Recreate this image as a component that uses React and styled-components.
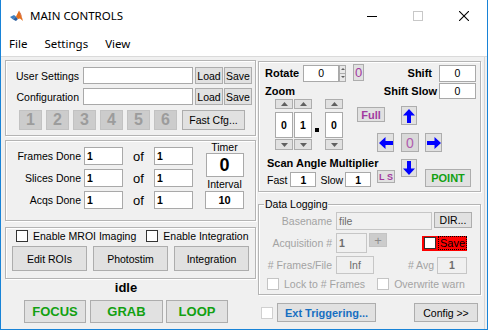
import React from "react";
import styled, { createGlobalStyle } from "styled-components";

const UI = `"Liberation Sans", Arial, sans-serif`;
const SYS = `"Noto Sans", "Open Sans", sans-serif`;
const MUTED = "#a3a3a3";
const PURPLE = "#a2399f";
const GREEN = "#12a012";
const BLUE = "#0000ff";

const GlobalStyle = createGlobalStyle`
  html, body { margin: 0; padding: 0; background: #fff; }
  * { box-sizing: border-box; }
`;

const Window = styled.div`
  width: 488px;
  height: 330px;
  display: flex;
  flex-direction: column;
  border: 1px solid #1883d7;
  border-top: none;
  background: #f0f0f0;
  font-family: ${UI};
  font-size: 10.5px;
  color: #000;
  overflow: hidden;
`;

const TitleBar = styled.div`
  height: 31px;
  flex-shrink: 0;
  display: flex;
  align-items: center;
  background: #fff;
`;

const AppIcon = styled.svg`
  margin-left: 9px;
  flex-shrink: 0;
`;

const Title = styled.span`
  margin-left: 7px;
  font-family: ${SYS};
  font-size: 11.5px;
`;

const Caption = styled.div`
  margin-left: auto;
  display: flex;
  height: 100%;
`;

const CaptionBtn = styled.div`
  width: 46px;
  height: 100%;
  display: flex;
  align-items: center;
  justify-content: center;
`;

const MenuBar = styled.div`
  height: 26px;
  flex-shrink: 0;
  display: flex;
  align-items: center;
  gap: 17px;
  padding-left: 8px;
  background: #fff;
  border-bottom: 1px solid #dadada;
  font-family: ${SYS};
  font-size: 11.5px;
`;

const Client = styled.div`
  flex: 1;
  display: flex;
  padding: 3px 0 0 4px;
  margin-right: 2px;
  border-right: 1px solid #d6d6d6;
`;

const LeftCol = styled.div`
  width: 251px;
  display: flex;
  flex-direction: column;
`;

const RightCol = styled.div`
  width: 223px;
  margin-left: 2px;
  display: flex;
  flex-direction: column;
`;

const Panel = styled.div`
  position: relative;
  height: ${(p) => p.$h}px;
  margin-top: ${(p) => p.$mt || 0}px;
  display: flex;
  flex-direction: ${(p) => (p.$row ? "row" : "column")};
  border: 1px solid #b4b4b4;
  box-shadow: inset 1px 1px 0 #fff, 1px 1px 0 #fff;
  padding: ${(p) => p.$pad || "0"};
`;

const GroupTitle = styled.span`
  position: absolute;
  top: -7px;
  left: 5px;
  padding: 0 1px;
  line-height: 12px;
  background: #f0f0f0;
`;

const Row = styled.div`
  display: flex;
  align-items: center;
  height: ${(p) => p.$h}px;
  margin-top: ${(p) => p.$mt || 0}px;
  padding-left: ${(p) => p.$pl || 0}px;
  gap: ${(p) => p.$gap || 0}px;
  flex-shrink: 0;
`;

const Label = styled.span`
  width: ${(p) => (p.$w ? `${p.$w}px` : "auto")};
  flex-shrink: 0;
  text-align: right;
  white-space: nowrap;
  margin-left: ${(p) => p.$ml || 0}px;
  margin-right: ${(p) => p.$mr || 0}px;
  color: ${(p) => (p.$muted ? MUTED : "#000")};
  font-weight: ${(p) => (p.$bold ? "bold" : "normal")};
  font-size: ${(p) => (p.$bold ? "11px" : "10.5px")};
`;

const TextBox = styled.div`
  width: ${(p) => p.$w}px;
  height: ${(p) => p.$h}px;
  margin-left: ${(p) => p.$ml || 0}px;
  margin-right: ${(p) => p.$mr || 0}px;
  flex-shrink: 0;
  display: flex;
  align-items: center;
  justify-content: ${(p) => (p.$left ? "flex-start" : "center")};
  padding-left: ${(p) => (p.$left ? 2 : 0)}px;
  background: ${(p) => (p.$off ? "#f0f0f0" : "#fff")};
  border: 1px solid ${(p) => (p.$off ? "#c6c6c6" : "#a9a9a9")};
  color: ${(p) => (p.$off ? "#6d6d6d" : "#000")};
  font-weight: ${(p) => (p.$bold ? "bold" : "normal")};
  font-size: ${(p) => p.$fs || 10.5}px;
`;

const Btn = styled.div`
  width: ${(p) => p.$w}px;
  height: ${(p) => p.$h}px;
  margin-left: ${(p) => p.$ml || 0}px;
  margin-top: ${(p) => p.$mt || 0}px;
  flex-shrink: 0;
  display: flex;
  align-items: center;
  justify-content: center;
  background: ${(p) => p.$bg || "#e1e1e1"};
  border: 1px solid ${(p) => p.$bd || "#adadad"};
  color: ${(p) => p.$color || "#000"};
  font-weight: ${(p) => (p.$bold ? "bold" : "normal")};
  font-size: ${(p) => p.$fs || 10.5}px;
  white-space: nowrap;
  grid-column: ${(p) => p.$col || "auto"};
  grid-row: ${(p) => p.$row || "auto"};
  justify-self: start;
  align-self: start;
`;

const Check = styled.span`
  width: 12px;
  height: 12px;
  flex-shrink: 0;
  background: #fff;
  border: 1px solid ${(p) => p.$bd || "#333"};
`;

const CheckItem = styled.label`
  display: flex;
  align-items: center;
  gap: ${(p) => p.$gap || 5}px;
  margin-left: ${(p) => p.$ml || 0}px;
  white-space: nowrap;
  color: ${(p) => (p.$muted ? MUTED : "#000")};
`;

const NumRow = styled.div`
  display: flex;
  gap: 4px;
  margin-top: 5px;
  padding-left: 13px;
`;

const DoneGrid = styled.div`
  display: grid;
  grid-template-columns: 78px 39px 31px 39px;
  grid-auto-rows: 18px;
  row-gap: 4px;
  margin-top: 6px;
  align-items: center;
`;

const Of = styled.span`
  text-align: center;
  font-size: 13px;
`;

const TimerCol = styled.div`
  width: 39px;
  margin-left: 12px;
  display: flex;
  flex-direction: column;
  align-items: center;
`;

const TimerCaption = styled.span`
  line-height: ${(p) => p.$lh}px;
`;

const Status = styled.div`
  margin-top: 1px;
  line-height: 16px;
  text-align: center;
  padding-right: 9px;
  font-size: 13px;
  font-weight: bold;
`;

const PadGrid = styled.div`
  display: grid;
  grid-template-columns: 92px 20px 18px 6px 18px 6px 18px 28px;
  grid-template-rows: 7px 19px 8px 19px 5px 2px 10px 3px 5px 10px;
`;

const ZoomSpin = styled.div`
  grid-column: 1;
  grid-row: 1 / 5;
  margin-left: 10px;
  display: flex;
  align-items: flex-start;
`;

const SpinCol = styled.div`
  width: 18px;
  margin-left: ${(p) => p.$ml || 0}px;
  display: flex;
  flex-direction: column;
`;

const SpinBtn = styled.div`
  height: ${(p) => p.$h}px;
  margin-top: ${(p) => p.$mt || 0}px;
  display: flex;
  align-items: center;
  justify-content: center;
  background: #e1e1e1;
  border: 1px solid #adadad;
`;

const Dot = styled.span`
  width: 4px;
  height: 4px;
  margin: 29px 6px 0 3px;
  background: #000;
`;

const Stepper = styled.div`
  width: 7px;
  height: 17px;
  display: flex;
  flex-direction: column;
  border: 1px solid #adadad;
  background: #e8e8e8;
`;

const StepHalf = styled.div`
  flex: 1;
  display: flex;
  align-items: center;
  justify-content: center;
  border-top: ${(p) => (p.$sep ? "1px solid #adadad" : "none")};
`;

const PlacedLabel = styled.span`
  grid-column: ${(p) => p.$col};
  grid-row: ${(p) => p.$row};
  margin-left: 2px;
  font-weight: bold;
  font-size: 11px;
  line-height: 12px;
  white-space: nowrap;
`;

const FastRow = styled.div`
  grid-column: 1 / 3;
  grid-row: 9 / 11;
  margin-left: 2px;
  display: flex;
  align-items: center;
`;

const SaveBox = styled.div`
  width: 45px;
  height: 15px;
  margin-left: 35px;
  display: flex;
  align-items: center;
  background: #ff0000;
  padding-left: 2px;
`;

const FocusText = styled.span`
  margin-left: 3px;
  outline: 1px dotted #000;
  line-height: 12px;
  padding: 0 1px;
  font-size: 11px;
`;

const Tri = ({ down, w = 7, h = 4, color = "#606060" }) => (
  <svg width={w} height={h} viewBox={`0 0 ${w} ${h}`}>
    <polygon
      points={down ? `0,0 ${w},0 ${w / 2},${h}` : `0,${h} ${w},${h} ${w / 2},0`}
      fill={color}
    />
  </svg>
);

const Arrow = ({ rot = 0 }) => (
  <svg width="14" height="14" viewBox="0 0 14 14" style={{ transform: `rotate(${rot}deg)` }}>
    <polygon points="7,0 13,6.5 9,6.5 9,14 5,14 5,6.5 1,6.5" fill={BLUE} />
  </svg>
);

const Spin = ({ value, ml }) => (
  <SpinCol $ml={ml}>
    <SpinBtn $h={10}>
      <Tri />
    </SpinBtn>
    <TextBox $w={18} $h={26} $bold style={{ marginTop: 3 }}>
      {value}
    </TextBox>
    <SpinBtn $h={11} $mt={1}>
      <Tri down />
    </SpinBtn>
  </SpinCol>
);

export default function App() {
  return (
    <>
      <GlobalStyle />
      <Window>
        <TitleBar>
          <AppIcon width="13" height="12" viewBox="0 0 13 12">
            <polygon points="0,7 4,5 6,6.5 3,9.5" fill="#3f7fc0" />
            <polygon points="3,9.5 6,6.5 8,9 6,11" fill="#2d5f9e" />
            <polygon points="6,6.5 9,0.5 13,11 10,8.5 8,9" fill="#e5701c" />
            <polygon points="9,0.5 11,4 13,11" fill="#c2401a" />
          </AppIcon>
          <Title>MAIN CONTROLS</Title>
          <Caption>
            <CaptionBtn>
              <svg width="10" height="10" viewBox="0 0 10 10">
                <line x1="0" y1="5.5" x2="10" y2="5.5" stroke="#000" />
              </svg>
            </CaptionBtn>
            <CaptionBtn>
              <svg width="10" height="10" viewBox="0 0 10 10">
                <rect x="0.5" y="0.5" width="9" height="9" fill="none" stroke="#c8c8c8" />
              </svg>
            </CaptionBtn>
            <CaptionBtn>
              <svg width="10" height="10" viewBox="0 0 10 10">
                <path d="M0 0 L10 10 M10 0 L0 10" stroke="#000" strokeWidth="1.1" />
              </svg>
            </CaptionBtn>
          </Caption>
        </TitleBar>

        <MenuBar>
          <span>File</span>
          <span>Settings</span>
          <span>View</span>
        </MenuBar>

        <Client>
          <LeftCol>
            <Panel $h={76}>
              <Row $h={17} $mt={6}>
                <Label $w={73}>User Settings</Label>
                <TextBox $w={110} $h={17} $ml={4} />
                <Btn $w={28} $h={17} $ml={2}>Load</Btn>
                <Btn $w={28} $h={17} $ml={1}>Save</Btn>
              </Row>
              <Row $h={17} $mt={4}>
                <Label $w={73}>Configuration</Label>
                <TextBox $w={110} $h={17} $ml={4} />
                <Btn $w={28} $h={17} $ml={2}>Load</Btn>
                <Btn $w={28} $h={17} $ml={1}>Save</Btn>
              </Row>
              <NumRow>
                {["1", "2", "3", "4", "5", "6"].map((n) => (
                  <Btn key={n} $w={23} $h={20} $bg="#cccccc" $bd="#c2c2c2" $color="#9c9c9c" $bold $fs={16}>
                    {n}
                  </Btn>
                ))}
                <Btn $w={63} $h={20} $ml={1}>Fast Cfg...</Btn>
              </NumRow>
            </Panel>

            <Panel $h={81} $mt={4} $row>
              <DoneGrid>
                {["Frames Done", "Slices Done", "Acqs Done"].map((l) => (
                  <React.Fragment key={l}>
                    <Label $mr={3}>{l}</Label>
                    <TextBox $w={39} $h={18} $left $bold>1</TextBox>
                    <Of>of</Of>
                    <TextBox $w={39} $h={18} $left $bold>1</TextBox>
                  </React.Fragment>
                ))}
              </DoneGrid>
              <TimerCol>
                <TimerCaption $lh={12}>Timer</TimerCaption>
                <TextBox $w={38} $h={24} $bold $fs={18}>0</TextBox>
                <TimerCaption $lh={14}>Interval</TimerCaption>
                <TextBox $w={39} $h={18} $bold $fs={11}>10</TextBox>
              </TimerCol>
            </Panel>

            <Panel $h={52} $mt={6}>
              <Row $h={12} $mt={2} $pl={10}>
                <CheckItem>
                  <Check />
                  Enable MROI Imaging
                </CheckItem>
                <CheckItem $ml={10}>
                  <Check />
                  Enable Integration
                </CheckItem>
              </Row>
              <Row $h={25} $mt={4} $pl={6} $gap={6}>
                <Btn $w={75} $h={25}>Edit ROIs</Btn>
                <Btn $w={75} $h={25}>Photostim</Btn>
                <Btn $w={75} $h={25}>Integration</Btn>
              </Row>
            </Panel>

            <Status>idle</Status>

            <Row $h={23} $mt={4} $pl={19}>
              <Btn $w={62} $h={23} $color={GREEN} $bold $fs={13}>FOCUS</Btn>
              <Btn $w={73} $h={23} $ml={4} $color={GREEN} $bold $fs={13}>GRAB</Btn>
              <Btn $w={62} $h={23} $ml={3} $color={GREEN} $bold $fs={13}>LOOP</Btn>
            </Row>
          </LeftCol>

          <RightCol>
            <Panel $h={131} $mt={1} $pad="2px 4px 0 6px">
              <Row $h={18}>
                <Label $bold>Rotate</Label>
                <TextBox $w={36} $h={17} $ml={4}>0</TextBox>
                <Stepper>
                  <StepHalf>
                    <Tri w={4} h={2} />
                  </StepHalf>
                  <StepHalf $sep>
                    <Tri down w={4} h={2} />
                  </StepHalf>
                </Stepper>
                <Btn $w={11} $h={17} $ml={7} $color={PURPLE} $fs={13}>0</Btn>
                <Label $bold $ml={0} style={{ marginLeft: "auto" }} $mr={7}>Shift</Label>
                <TextBox $w={37} $h={17}>0</TextBox>
              </Row>
              <Row $h={17}>
                <Label $bold>Zoom</Label>
                <Label $bold style={{ marginLeft: "auto" }} $mr={2}>Shift Slow</Label>
                <TextBox $w={37} $h={16}>0</TextBox>
              </Row>
              <PadGrid>
                <ZoomSpin>
                  <Spin value="0" />
                  <Spin value="1" ml={1} />
                  <Dot />
                  <Spin value="0" />
                </ZoomSpin>
                <Btn $col="2 / 4" $row="2" $mt={1} $w={28} $h={15} $color={PURPLE} $bold $fs={11}>Full</Btn>
                <Btn $col="5" $row="2" $w={16} $h={19}><Arrow /></Btn>
                <Btn $col="3" $row="4" $w={17} $h={19}><Arrow rot={-90} /></Btn>
                <Btn $col="5" $row="4" $w={18} $h={19} $bg="#d9d9d9" $color="#b05cae" $fs={14}>0</Btn>
                <Btn $col="7" $row="4" $w={17} $h={19}><Arrow rot={90} /></Btn>
                <Btn $col="5" $row="7 / 10" $w={16} $h={18}><Arrow rot={180} /></Btn>
                <PlacedLabel $col="1 / 5" $row="6 / 8">Scan Angle Multiplier</PlacedLabel>
                <FastRow>
                  <Label>Fast</Label>
                  <TextBox $w={26} $h={15} $ml={3} $bold>1</TextBox>
                  <Label $ml={4}>Slow</Label>
                  <TextBox $w={26} $h={15} $ml={2} $bold>1</TextBox>
                </FastRow>
                <Btn $col="3" $row="8 / 11" $mt={1} $w={18} $h={13} $color={PURPLE} $bold $fs={9}>L S</Btn>
                <Btn $col="7 / 9" $row="8 / 11" $w={46} $h={18} $color={GREEN} $bold $fs={11}>POINT</Btn>
              </PadGrid>
            </Panel>

            <Panel $h={91} $mt={12}>
              <GroupTitle>Data Logging</GroupTitle>
              <Row $h={18} $mt={7} style={{ alignItems: "flex-start" }}>
                <Label $w={73} $muted style={{ lineHeight: "18px" }}>Basename</Label>
                <TextBox $w={96} $h={18} $ml={4} $off $left>file</TextBox>
                <Btn $w={38} $h={16} $ml={2}>DIR...</Btn>
              </Row>
              <Row $h={20} $mt={3}>
                <Label $w={73} $muted>Acquisition #</Label>
                <TextBox $w={31} $h={20} $ml={4} $off $left $bold>1</TextBox>
                <Btn $w={18} $h={14} $ml={2} $bg="#cccccc" $bd="#c4c4c4" $color="#8c8c8c" $fs={13}>+</Btn>
                <SaveBox>
                  <Check />
                  <FocusText>Save</FocusText>
                </SaveBox>
              </Row>
              <Row $h={18} $mt={3}>
                <Label $w={73} $muted>
                  # Frames/File
                </Label>
                <TextBox $w={38} $h={18} $ml={4} $off>Inf</TextBox>
                <Label $muted style={{ marginLeft: "auto" }} $mr={3}># Avg</Label>
                <TextBox $w={30} $h={17} $mr={13} $off $bold>1</TextBox>
              </Row>
              <Row $h={12} $mt={4} $pl={8}>
                <CheckItem $muted>
                  <Check $bd="#c4c4c4" />
                  Lock to # Frames
                </CheckItem>
                <CheckItem $muted $ml={12}>
                  <Check $bd="#c4c4c4" />
                  Overwrite warn
                </CheckItem>
              </Row>
            </Panel>

            <Row $h={19} $mt={8} $pl={3}>
              <Check $bd="#d0d0d0" />
              <Btn $w={99} $h={19} $ml={4} $color="#176fc1" $bold $fs={11}>Ext Triggering...</Btn>
              <Btn $w={64} $h={19} style={{ marginLeft: "auto", marginRight: 3 }}>Config &gt;&gt;</Btn>
            </Row>
          </RightCol>
        </Client>
      </Window>
    </>
  );
}
